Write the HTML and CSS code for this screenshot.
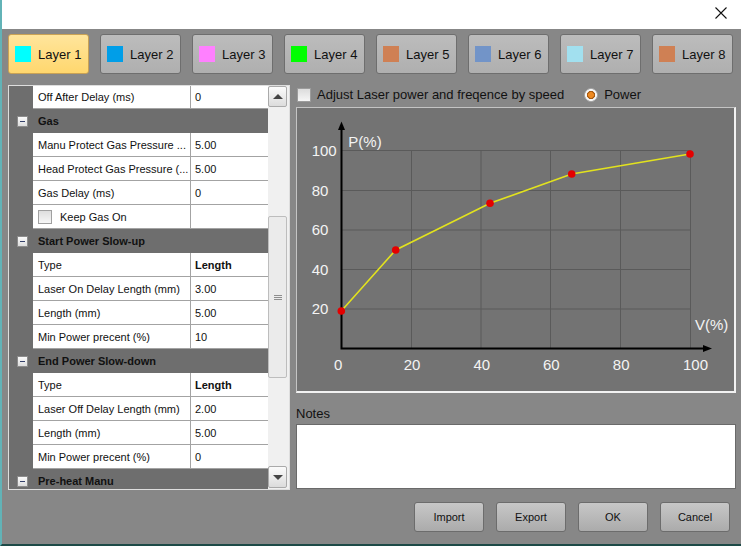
FILE: index.html
```html
<!DOCTYPE html>
<html>
<head>
<meta charset="utf-8">
<link rel="stylesheet" href="styles.css">
</head>
<body>
<div class="window">
  <div class="titlebar">
    <span class="close"><svg width="12" height="12" viewBox="0 0 12 12"><path d="M0.5 0.5 L11.5 11.5 M11.5 0.5 L0.5 11.5" stroke="#111" stroke-width="1.1" fill="none"/></svg></span>
  </div>
  <div class="main">
    <div class="layers">
      <button class="layer active"><span class="swatch" style="background:#00ffff"></span>Layer 1</button>
      <button class="layer"><span class="swatch" style="background:#009ee8"></span>Layer 2</button>
      <button class="layer"><span class="swatch" style="background:#ff80ff"></span>Layer 3</button>
      <button class="layer"><span class="swatch" style="background:#00ff00"></span>Layer 4</button>
      <button class="layer"><span class="swatch" style="background:#cf8054"></span>Layer 5</button>
      <button class="layer"><span class="swatch" style="background:#7294c8"></span>Layer 6</button>
      <button class="layer"><span class="swatch" style="background:#a2e0ef"></span>Layer 7</button>
      <button class="layer"><span class="swatch" style="background:#cf8054"></span>Layer 8</button>
    </div>
    <div class="content">
      <div class="grid">
        <div class="rows">
          <div class="rows-inner">
            <div class="row"><div class="g"></div><div class="n">Off After Delay (ms)</div><div class="v">0</div></div>
            <div class="row cat"><div class="g"><span class="minus"></span></div><div class="label">Gas</div></div>
            <div class="row"><div class="g"></div><div class="n">Manu Protect Gas Pressure ...</div><div class="v">5.00</div></div>
            <div class="row"><div class="g"></div><div class="n">Head Protect Gas Pressure (...</div><div class="v">5.00</div></div>
            <div class="row"><div class="g"></div><div class="n">Gas Delay (ms)</div><div class="v">0</div></div>
            <div class="row"><div class="g"></div><div class="n"><span class="cb"></span>Keep Gas On</div><div class="v"></div></div>
            <div class="row cat"><div class="g"><span class="minus"></span></div><div class="label">Start Power Slow-up</div></div>
            <div class="row"><div class="g"></div><div class="n">Type</div><div class="v b">Length</div></div>
            <div class="row"><div class="g"></div><div class="n">Laser On Delay Length (mm)</div><div class="v">3.00</div></div>
            <div class="row"><div class="g"></div><div class="n">Length (mm)</div><div class="v">5.00</div></div>
            <div class="row"><div class="g"></div><div class="n">Min Power precent (%)</div><div class="v">10</div></div>
            <div class="row cat"><div class="g"><span class="minus"></span></div><div class="label">End Power Slow-down</div></div>
            <div class="row"><div class="g"></div><div class="n">Type</div><div class="v b">Length</div></div>
            <div class="row"><div class="g"></div><div class="n">Laser Off Delay Length (mm)</div><div class="v">2.00</div></div>
            <div class="row"><div class="g"></div><div class="n">Length (mm)</div><div class="v">5.00</div></div>
            <div class="row"><div class="g"></div><div class="n">Min Power precent (%)</div><div class="v">0</div></div>
            <div class="row cat"><div class="g"><span class="minus"></span></div><div class="label">Pre-heat Manu</div></div>
          </div>
        </div>
        <div class="scroll">
          <div class="sb-btn"><span class="tri-up"></span></div>
          <div class="thumb"><span class="grip"></span></div>
          <div class="sb-btn down"><span class="tri-down"></span></div>
        </div>
      </div>
      <div class="right">
        <div class="opts">
          <span class="check"></span><span>Adjust Laser power and freqence by speed</span>
          <span class="radio"></span><span>Power</span>
        </div>
        <div class="chart">
          <svg width="437" height="283" viewBox="0 0 437 283">
            <g stroke="#5a5a5a" stroke-width="1" fill="none">
              <path d="M44.5 42.5H393.5 M44.5 82.5H393.5 M44.5 122H393.5 M44.5 161.5H393.5 M44.5 201H393.5"/>
              <path d="M114.5 42.5V240.5 M184 42.5V240.5 M253.5 42.5V240.5 M323.5 42.5V240.5 M393.5 42.5V240.5"/>
            </g>
            <g stroke="#000" stroke-width="2" fill="none">
              <path d="M44.5 20V241.5 M43.5 240.5H408"/>
            </g>
            <polygon points="44.5,13.5 41,22 48,22" fill="#000"/>
            <polygon points="415,240.5 406,237 406,244" fill="#000"/>
            <polyline points="44.3,203 98.7,142 193,95.3 274.7,66 393,46" fill="none" stroke="#e2e21e" stroke-width="1.6"/>
            <g fill="#e40000">
              <circle cx="44.3" cy="203" r="3.8"/>
              <circle cx="98.7" cy="142" r="3.8"/>
              <circle cx="193" cy="95.3" r="3.8"/>
              <circle cx="274.7" cy="66" r="3.8"/>
              <circle cx="393" cy="46" r="3.8"/>
            </g>
            <g class="lbl">
              <text x="14.7" y="48">100</text>
              <text x="14.7" y="87.6">80</text>
              <text x="14.7" y="127.2">60</text>
              <text x="14.7" y="166.8">40</text>
              <text x="14.7" y="206.4">20</text>
              <text x="37" y="262">0</text>
              <text x="106.7" y="262">20</text>
              <text x="176.4" y="262">40</text>
              <text x="246" y="262">60</text>
              <text x="315.8" y="262">80</text>
              <text x="386" y="262">100</text>
              <text x="51.3" y="38.7">P(%)</text>
              <text x="398" y="222">V(%)</text>
            </g>
          </svg>
        </div>
        <div class="notes-label">Notes</div>
        <div class="notes"></div>
        <div class="actions">
          <button class="btn">Import</button>
          <button class="btn">Export</button>
          <button class="btn">OK</button>
          <button class="btn">Cancel</button>
        </div>
      </div>
    </div>
  </div>
</div>
</body>
</html>
```
FILE: styles.css
```css
* { box-sizing: border-box; }
html, body { margin: 0; padding: 0; }
body {
  font-family: "Liberation Sans", Arial, sans-serif;
  background: #878787;
  color: #111;
}
.window {
  width: 741px;
  height: 546px;
  display: flex;
  flex-direction: column;
  border-left: 2px solid #62b3b7;
  border-bottom: 2px solid #1d4a47;
  overflow: hidden;
}
.titlebar {
  height: 29px;
  flex: none;
  background: #fff;
  display: flex;
  justify-content: flex-end;
  align-items: flex-start;
  padding: 7px 14px 0 0;
}
.close svg { display: block; }
.main {
  flex: 1;
  background: #878787;
  padding: 5px 0 0 6px;
  display: flex;
  flex-direction: column;
}
.layers {
  display: flex;
  gap: 11px;
  height: 40px;
}
.layer {
  width: 81px;
  height: 40px;
  margin: 0;
  border: 1px solid #6e6e6e;
  border-radius: 3px;
  background: linear-gradient(#bcbcbc, #afafaf);
  display: flex;
  align-items: center;
  gap: 7px;
  padding: 0 0 0 6px;
  font-family: inherit;
  font-size: 13px;
  color: #111;
}
.layer.active {
  background: linear-gradient(#ffe59c, #ffd76e);
  border-color: #c9a255;
}
.swatch {
  width: 16px;
  height: 16px;
  flex: none;
}
.content {
  display: flex;
  gap: 6px;
  margin-top: 11px;
}
.grid {
  width: 282px;
  height: 405px;
  border: 1px solid #dedede;
  display: flex;
  background: #fff;
}
.rows {
  width: 259px;
  overflow: hidden;
}
.rows-inner { margin-top: -1px; }
.row {
  display: grid;
  grid-template-columns: 24px 158px 1fr;
  height: 24px;
  font-size: 11px;
}
.row .g { background: #6e6e6e; }
.row .n {
  background: #fff;
  border-bottom: 1px solid #a3a3a3;
  border-right: 1px solid #a3a3a3;
  padding-left: 5px;
  display: flex;
  align-items: center;
  white-space: nowrap;
  overflow: hidden;
}
.row .v {
  background: #fff;
  border-bottom: 1px solid #a3a3a3;
  padding-left: 4px;
  display: flex;
  align-items: center;
}
.row .v.b { font-weight: bold; }
.row.cat {
  background: #6e6e6e;
  grid-template-columns: 24px 1fr;
}
.cat .g {
  display: flex;
  align-items: center;
  padding-left: 8px;
}
.cat .label {
  font-weight: bold;
  padding-left: 5px;
  display: flex;
  align-items: center;
  color: #111;
}
.minus {
  width: 11px;
  height: 11px;
  border: 1px solid #8c8c8c;
  background: linear-gradient(#fafafa, #dcdcdc);
  display: flex;
  align-items: center;
  justify-content: center;
}
.minus::before {
  content: "";
  width: 5px;
  height: 1px;
  background: #34406a;
}
.cb {
  width: 14px;
  height: 14px;
  border: 1px solid #a0a0a0;
  background: linear-gradient(#dedede, #f6f6f6);
  margin-right: 8px;
}
.scroll {
  width: 21px;
  background: #f0f0f0;
  display: flex;
  flex-direction: column;
  padding: 0 2px 1px 0;
}
.sb-btn {
  height: 21px;
  flex: none;
  border: 1px solid #aaaaaa;
  border-radius: 2px;
  background: linear-gradient(#fbfbfb, #dcdcdc);
  display: flex;
  align-items: center;
  justify-content: center;
}
.sb-btn.down {
  height: 22px;
  margin-top: auto;
}
.tri-up {
  width: 0; height: 0;
  border-left: 5px solid transparent;
  border-right: 5px solid transparent;
  border-bottom: 5px solid #444;
}
.tri-down {
  width: 0; height: 0;
  border-left: 5px solid transparent;
  border-right: 5px solid transparent;
  border-top: 5px solid #444;
}
.thumb {
  margin-top: 109px;
  height: 162px;
  border: 1px solid #bdbdbd;
  border-radius: 2px;
  background: #ebebeb;
  display: flex;
  align-items: center;
  justify-content: center;
}
.grip {
  width: 8px;
  height: 5px;
  border-top: 1px solid #8e8e8e;
  border-bottom: 1px solid #8e8e8e;
  background: linear-gradient(transparent 1px, #8e8e8e 1px, #8e8e8e 2px, transparent 2px);
}
.right {
  width: 440px;
  display: flex;
  flex-direction: column;
}
.opts {
  height: 19px;
  display: flex;
  align-items: center;
  font-size: 13px;
  color: #111;
  margin-bottom: 3px;
}
.check {
  width: 14px;
  height: 14px;
  border: 1px solid #9c9c9c;
  background: linear-gradient(#dcdcdc, #f6f6f6);
  margin-left: 1px;
  margin-right: 6px;
}
.radio {
  width: 14px;
  height: 14px;
  border-radius: 50%;
  margin-left: 20px;
  margin-right: 6px;
  background: radial-gradient(circle, #ee8a22 0 2.6px, #a85a10 3.2px 3.8px, #f6f6f6 4.4px 5.6px, #a8a8a8 6.2px 7px, transparent 7px);
}
.chart {
  height: 286px;
  border-top: 1px solid #c4c4c4;
  border-left: 1px solid #c4c4c4;
  border-right: 2px solid #f2f2f2;
  border-bottom: 2px solid #f2f2f2;
  background: #737373;
}
.chart svg { display: block; }
.lbl text {
  font-family: "Liberation Sans", Arial, sans-serif;
  font-size: 15px;
  fill: #f4f4f4;
}
.notes-label {
  margin-top: 13px;
  font-size: 13px;
  line-height: 16px;
  color: #111;
}
.notes {
  margin-top: 2px;
  height: 65px;
  background: #fff;
  border: 1px solid #6a6a6a;
}
.actions {
  margin-top: 13px;
  display: flex;
  justify-content: flex-end;
  gap: 12px;
  padding-right: 6px;
}
.btn {
  width: 70px;
  height: 30px;
  margin: 0;
  border: 1px solid #6c6c6c;
  border-radius: 3px;
  background: linear-gradient(#c7c7c7, #ababab);
  font-family: inherit;
  font-size: 11px;
  color: #111;
}
```
